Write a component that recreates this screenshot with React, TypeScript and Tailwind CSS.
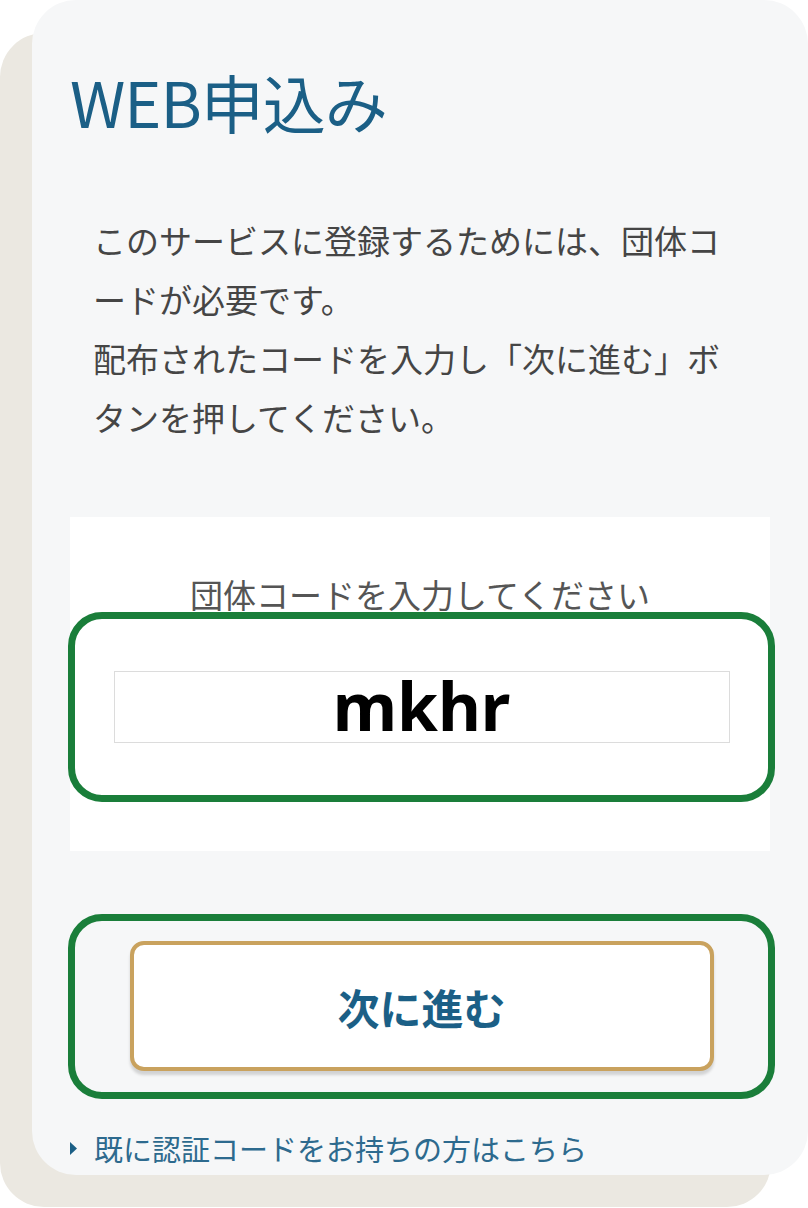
const jp = { fontFamily: '"Noto Sans CJK JP", "Noto Sans", sans-serif' };

export default function App() {
  return (
    <div className="w-[808px] h-[1208px] bg-white overflow-hidden" style={jp}>
      {/* back card */}
      <div className="mt-[33px] w-[771px] h-[1174px] rounded-[44px] bg-[#ebe8e1] flex flex-col">
        {/* front card */}
        <div className="-mt-[33px] ml-[32px] w-[776px] h-[1175px] shrink-0 rounded-[44px] bg-[#f6f7f8] flex flex-col">
          <h1 className="ml-[38px] mt-[68px] text-[63px] leading-[66px] font-normal text-[#1b5f86] tracking-[-1px]">
            WEB申込み
          </h1>

          <div className="ml-[61px] mt-[77px] text-[33px] leading-[59px] text-[#454545] whitespace-nowrap">
            <p>このサービスに登録するためには、団体コ</p>
            <p>ードが必要です。</p>
            <p>配布されたコードを入力し「次に進む」ボ</p>
            <p>タンを押してください。</p>
          </div>

          {/* code panel */}
          <div className="ml-[38px] mt-[70px] w-[700px] h-[334px] bg-white flex flex-col">
            <p className="mt-[57px] text-center text-[33px] leading-[40px] text-[#555]">
              団体コードを入力してください
            </p>
            <div className="-ml-[2px] -mt-[2px] w-[707px] h-[190px] rounded-[34px] border-[7px] border-[#1a7e3a] flex items-center justify-center">
              <div className="w-[616px] h-[72px] border border-[#dcdcdc] bg-white flex items-center justify-center">
                <span
                  className="text-[66px] font-bold text-black leading-none -mt-[4px]"
                  style={{ fontFamily: '"Noto Sans", sans-serif' }}
                >
                  mkhr
                </span>
              </div>
            </div>
          </div>

          {/* next button */}
          <div className="ml-[36px] mt-[63px] w-[707px] h-[185px] rounded-[34px] border-[7px] border-[#1a7e3a] flex items-center justify-center">
            <button className="-mt-[1px] w-[584px] h-[130px] rounded-[14px] bg-white border-[4px] border-[#c9a25e] shadow-[0_4px_3px_rgba(0,0,0,0.15)] text-[42px] font-bold text-[#1b5f86]">
              次に進む
            </button>
          </div>

          {/* existing code link */}
          <div className="ml-[38px] mt-[30px] flex items-center text-[29px] leading-[38px] text-[#2d6a8e]">
            <svg width="7" height="13" viewBox="0 0 7 13" className="mr-[17px]">
              <path d="M0 0 L7 6.5 L0 13 Z" fill="#1b5f86" />
            </svg>
            <span>既に認証コードをお持ちの方はこちら</span>
          </div>
        </div>
      </div>
    </div>
  );
}
